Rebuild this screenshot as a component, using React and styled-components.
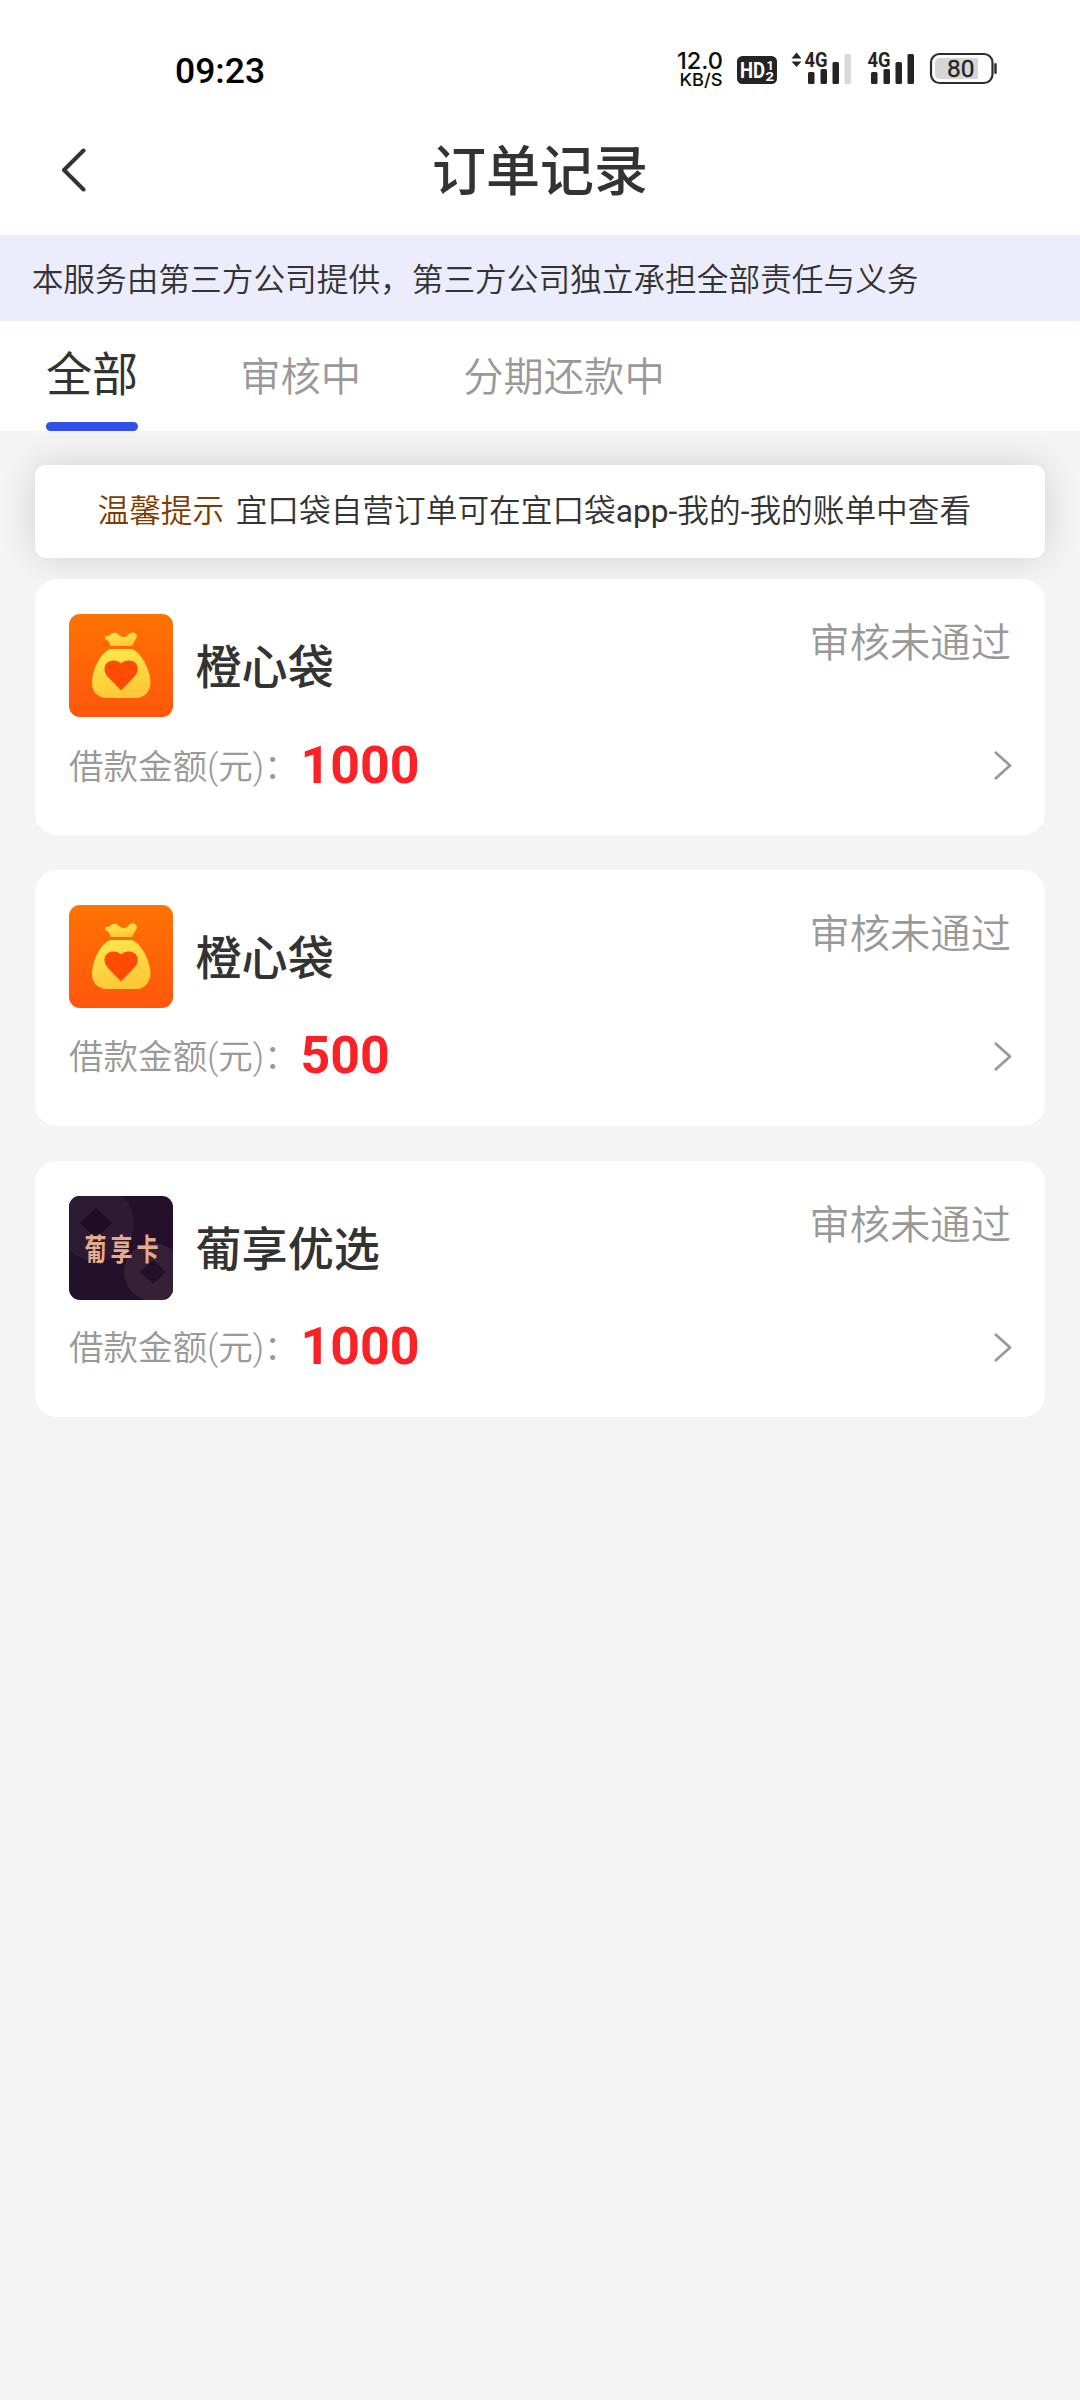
import React, { useState } from "react";
import styled, { createGlobalStyle } from "styled-components";

const tabs = ["全部", "审核中", "分期还款中"];

const orders = [
  { id: 1, name: "橙心袋", logo: "bag", amount: 1000, status: "审核未通过" },
  { id: 2, name: "橙心袋", logo: "bag", amount: 500, status: "审核未通过" },
  { id: 3, name: "葡享优选", logo: "card", amount: 1000, status: "审核未通过" },
];

const StatusIcons = () => {
  return (
    <svg width="330" height="50" viewBox="670 45 330 50">
      {/* network speed */}
      <g fill="#0c0c0c" fontFamily="Inter, sans-serif">
        <text x="677" y="69" fontSize="23.5" fontWeight="550" textLength="46" lengthAdjust="spacingAndGlyphs">
          12.0
        </text>
        <text x="679.5" y="86" fontSize="17.5" fontWeight="500" textLength="43" lengthAdjust="spacingAndGlyphs">
          KB/S
        </text>
      </g>
      {/* hd badge */}
      <rect x="737" y="56" width="40" height="28" rx="5.5" fill="#242424" />
      <g fill="#fff" fontFamily="Roboto, sans-serif" fontWeight="700">
        <text x="740" y="78" fontSize="21.5" textLength="25" lengthAdjust="spacingAndGlyphs">
          HD
        </text>
        <text x="766.5" y="70" fontSize="13">1</text>
        <text x="765.5" y="80.5" fontSize="13" textLength="8.5" lengthAdjust="spacingAndGlyphs">2</text>
      </g>
      {/* sim 1 */}
      <g fill="#242424">
        <path d="M791.5 58.5L796.5 52.5L801.5 58.5Z" />
        <path d="M791.5 61.5L796.5 67L801.5 61.5Z" />
        <text x="804.5" y="66.7" fontSize="20" fontWeight="700" fontFamily="Roboto, sans-serif" textLength="23" lengthAdjust="spacingAndGlyphs">
          4G
        </text>
        <rect x="808" y="72" width="6.5" height="12" rx="1.5" />
        <rect x="820.5" y="69" width="6.5" height="15" rx="1.5" />
        <rect x="832.5" y="62" width="6.5" height="22" rx="1.5" />
        <rect x="844.5" y="54" width="6.5" height="30" rx="1.5" fill="#d9d9d9" />
      </g>
      {/* sim 2 */}
      <g fill="#242424">
        <text x="867.5" y="66.7" fontSize="20" fontWeight="700" fontFamily="Roboto, sans-serif" textLength="23" lengthAdjust="spacingAndGlyphs">
          4G
        </text>
        <rect x="871" y="72" width="6.5" height="12" rx="1.5" />
        <rect x="883.5" y="69" width="6.5" height="15" rx="1.5" />
        <rect x="895.5" y="62" width="6.5" height="22" rx="1.5" />
        <rect x="907.5" y="54" width="6.5" height="30" rx="1.5" />
      </g>
      {/* battery */}
      <rect x="931" y="54" width="61.5" height="29" rx="8.5" fill="#fff" stroke="#2b2b2b" strokeWidth="2.2" />
      <path d="M940 58H978V79H940Q935 79 935 74V63Q935 58 940 58Z" fill="#d6d6d6" />
      <rect x="994.3" y="63" width="2.4" height="11" rx="1.2" fill="#2b2b2b" />
      <text x="947" y="76.5" fontSize="23" fontWeight="400" fill="#242424" stroke="#242424" strokeWidth="0.3" fontFamily="Roboto, sans-serif" textLength="27.5" lengthAdjust="spacingAndGlyphs">
        80
      </text>
    </svg>
  );
};

const BagLogo = () => {
  return (
    <svg width="104" height="103" viewBox="0 0 104 103">
      <defs>
        <linearGradient id="bagBg" x1="0" y1="0" x2="0" y2="1">
          <stop offset="0" stopColor="#ff7303" />
          <stop offset="1" stopColor="#ff570d" />
        </linearGradient>
        <linearGradient id="bagFill" x1="0" y1="0" x2="0.3" y2="1">
          <stop offset="0" stopColor="#ffe94f" />
          <stop offset="1" stopColor="#fdc936" />
        </linearGradient>
      </defs>
      <rect width="104" height="103" rx="11" fill="url(#bagBg)" />
      <path
        d="M36 23.500C36 21 39 22.500 41 21C43.500 18.500 47 18 49.500 20.500C52 23.500 56 24 59 21C60.500 19 63.500 18 65.500 19C68.500 20.500 68.500 23 66.500 25.500L63 32H41.500L39.500 27Q36 25.500 36 23.500Z"
        fill="url(#bagFill)"
      />
      <path
        d="M42 35H62C64 35 65 36 67 37.500C76 44 81.500 60 81.500 68C81.500 77 76 84 67 84H38C28 84 23 77 23 69C23 58 29 44 37 37.500C39 36 40 35 42 35Z"
        fill="url(#bagFill)"
      />
      <path
        d="M52 76.500L38.500 62.500C34 57.500 34.500 50 40 47.500C44.500 45.500 49 46.500 52 49.500C55 46.500 60 45.500 64.500 47.500C70 50.500 70 58 65.500 62.500Z"
        fill="#ff4b04"
      />
    </svg>
  );
};

const CardLogo = () => {
  return (
    <svg width="104" height="104" viewBox="0 0 104 104">
      <defs>
        <clipPath id="cardClip">
          <rect width="104" height="104" rx="11" />
        </clipPath>
      </defs>
      <g clipPath="url(#cardClip)">
        <rect width="104" height="104" fill="#24102a" />
        <circle cx="27" cy="27" r="38" fill="#2f1a33" />
        <path d="M27 12L43 27L27 42L11 27Z" fill="#200c26" />
        <circle cx="84" cy="76" r="29" fill="#352037" />
        <path d="M84 64L97 76L84 88L71 76Z" fill="#22102a" />
        <text
          transform="translate(15.500 63.500) scale(1 1.350)"
          fontSize="22"
          fontWeight="700"
          letterSpacing="4"
          fill="#e6ab8a"
          fontFamily="'Noto Sans CJK SC', sans-serif"
        >
          葡享卡
        </text>
      </g>
    </svg>
  );
};

const OrderCard = ({ name, logo, amount, status }) => {
  return (
    <Card>
      <div className="top">
        {logo === "bag" ? <BagLogo /> : <CardLogo />}
        <h3>{name}</h3>
        <span className="status">{status}</span>
      </div>
      <div className="bottom">
        <span className="label">借款金额(元)：</span>
        <span className="amount">{amount}</span>
        <svg className="arrow" width="20" height="32" viewBox="0 0 20 32">
          <path d="M3 2L18 15.500L3 29" fill="none" stroke="#999" strokeWidth="2.800" strokeLinejoin="round" />
        </svg>
      </div>
    </Card>
  );
};

const App = () => {
  const [active, setActive] = useState(0);
  return (
    <Wrapper>
      <GlobalStyle />
      <StatusBar>
        <span className="time">09:23</span>
        <StatusIcons />
      </StatusBar>
      <Header>
        <button type="button">
          <svg width="28" height="46" viewBox="0 0 28 46">
            <path d="M23.500 2.500L4 22L23.500 41.500" fill="none" stroke="#333" strokeWidth="4" strokeLinecap="round" strokeLinejoin="round" />
          </svg>
        </button>
        <h1>订单记录</h1>
      </Header>
      <Notice>本服务由第三方公司提供，第三方公司独立承担全部责任与义务</Notice>
      <Tabs>
        {tabs.map((t, index) => {
          return (
            <Tab key={t} type="button" $active={active === index} onClick={() => setActive(index)}>
              {t}
            </Tab>
          );
        })}
      </Tabs>
      <Content>
        <Tip>
          <span>温馨提示</span>
          <p>
            宜口袋自营订单可在宜口袋<b>app-</b>我的<b>-</b>我的账单中查看
          </p>
        </Tip>
        {/* orders */}
        <div className="orders">
          {orders.map((order) => {
            return <OrderCard key={order.id} {...order} />;
          })}
        </div>
      </Content>
    </Wrapper>
  );
};

const GlobalStyle = createGlobalStyle`
  * {
    box-sizing: border-box;
    margin: 0;
    padding: 0;
  }
  body {
    background: #f4f4f4;
    font-family: Roboto, "Noto Sans CJK SC", sans-serif;
    color: #333;
  }
  button {
    background: transparent;
    border: none;
    font-family: inherit;
    cursor: pointer;
  }
  svg {
    display: block;
    flex-shrink: 0;
  }
`;

const Wrapper = styled.main`
  width: 1080px;
  min-height: 2400px;
  background: #f4f4f4;
`;

const StatusBar = styled.div`
  display: flex;
  justify-content: space-between;
  height: 107px;
  padding: 45px 80px 0 175px;
  background: #fff;
  .time {
    font-size: 35.5px;
    font-weight: 500;
    line-height: 52px;
    color: #000;
  }
`;

const Header = styled.header`
  display: grid;
  grid-template-columns: 120px 1fr 120px;
  align-items: center;
  height: 128px;
  background: #fff;
  button {
    padding-left: 60px;
  }
  h1 {
    padding-top: 4px;
    text-align: center;
    font-size: 54px;
    font-weight: 500;
    line-height: 80px;
  }
`;

const Notice = styled.p`
  height: 86px;
  padding-left: 31.7px;
  background: #ebedfc;
  font-size: 31.68px;
  font-weight: 350;
  line-height: 91px;
`;

const Tabs = styled.nav`
  display: flex;
  gap: 102px;
  height: 110px;
  padding: 0 46px;
  background: #fff;
`;

const Tab = styled.button`
  height: 110px;
  font-size: ${({ $active }) => ($active ? "46.08px" : "40.32px")};
  font-weight: ${({ $active }) => ($active ? 400 : 350)};
  line-height: ${({ $active }) => ($active ? "108px" : "113px")};
  color: ${({ $active }) => ($active ? "#333" : "#999")};
  &::after {
    content: "";
    display: ${({ $active }) => ($active ? "block" : "none")};
    height: 9px;
    margin-top: -7px;
    border-radius: 4.5px;
    background: #3050e8;
  }
`;

const Content = styled.section`
  padding: 34px 35px;
  .orders {
    display: flex;
    flex-direction: column;
    gap: 34.8px;
    margin-top: 21px;
  }
`;

const Tip = styled.div`
  display: flex;
  gap: 11.5px;
  height: 93px;
  padding-left: 62.5px;
  border-radius: 11px;
  background: #fff;
  box-shadow: 0 0 36px rgba(0, 0, 0, 0.14);
  font-size: 31.68px;
  font-weight: 350;
  line-height: 93px;
  white-space: nowrap;
  span {
    color: #7d3c00;
  }
  b {
    font-weight: 400;
  }
`;

const Card = styled.article`
  height: 256px;
  padding: 35px 34px;
  border-radius: 22px;
  background: #fff;
  .top {
    display: flex;
    align-items: flex-start;
    height: 104px;
  }
  h3 {
    margin-left: 22.5px;
    font-size: 46.08px;
    font-weight: 500;
    line-height: 108px;
  }
  .status {
    margin-left: auto;
    font-size: 40.32px;
    font-weight: 350;
    line-height: 60px;
    color: #999;
  }
  .bottom {
    display: flex;
    align-items: center;
    height: 96px;
  }
  .label {
    margin-top: 1px;
    font-size: 34.56px;
    font-weight: 350;
    line-height: 40px;
    color: #999;
  }
  .amount {
    margin: 0 0 1px 2px;
    font-size: 51.84px;
    font-weight: 700;
    line-height: 60px;
    color: #fa2227;
  }
  .arrow {
    margin: 0 -1px 0 auto;
  }
`;

export default App;
